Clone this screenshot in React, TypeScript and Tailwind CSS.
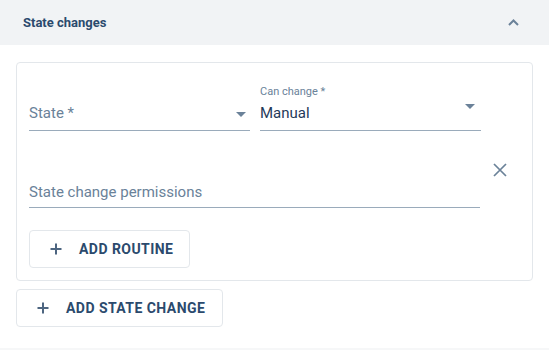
function Triangle({ className = "" }: { className?: string }) {
  return (
    <svg width="10" height="5" viewBox="0 0 10 5" className={className}>
      <path d="M0 0 L10 0 L5 5 Z" fill="#6b8299" />
    </svg>
  );
}

function PlusIcon() {
  return (
    <svg width="12" height="12" viewBox="0 0 12 12" className="shrink-0">
      <path d="M6 0.5 V11.5 M0.5 6 H11.5" stroke="#4d6580" strokeWidth="2" />
    </svg>
  );
}

function OutlineButton({ label, width }: { label: string; width: string }) {
  return (
    <button
      type="button"
      className={`${width} h-[38px] flex items-center pl-[20px] border border-[#e3e7eb] rounded-[4px] bg-white text-[#2b4a6d]`}
    >
      <PlusIcon />
      <span className="ml-[17px] text-[14px] font-bold tracking-[0.45px] leading-none">{label}</span>
    </button>
  );
}

export default function App() {
  return (
    <div className="w-[549px] h-[350px] bg-white flex flex-col font-['Roboto',sans-serif]">
      <div className="h-[45px] shrink-0 bg-[#f1f3f5] flex items-center justify-between pl-[23px] pr-[30px]">
        <span className="text-[13px] font-bold text-[#2b4a6d]">State changes</span>
        <svg width="11" height="7" viewBox="0 0 11 7">
          <path d="M1 6 L5.5 1.5 L10 6" fill="none" stroke="#6b8299" strokeWidth="2" />
        </svg>
      </div>

      <div className="px-4 pt-[17px] flex flex-col items-start">
        <div className="w-[517px] border border-[#e3e7eb] rounded-[4px] pl-[12px] pt-[21px] pb-[12px]">
          <div className="flex gap-[10px]">
            <div className="w-[221px] flex flex-col">
              <div className="h-[16px]" />
              <div className="h-[31px] pt-[3px] pb-[7px] flex items-center justify-between border-b border-[#9aabbb]">
                <span className="text-[15px] leading-[20px] text-[#6a8299]">State *</span>
                <Triangle className="mr-[4px] mt-[2px]" />
              </div>
            </div>
            <div className="w-[221px] flex flex-col">
              <div className="h-[16px] text-[11px] leading-[16px] text-[#6a8299]">Can change *</div>
              <div className="h-[31px] pt-[3px] pb-[7px] flex items-start justify-between border-b border-[#9aabbb]">
                <span className="text-[15px] leading-[20px] text-[#1f3a5a]">Manual</span>
                <Triangle className="mr-[6px] mt-[1px]" />
              </div>
            </div>
          </div>

          <div className="mt-[29px] flex items-start">
            <div className="w-[451px] pt-[22px] pb-[5px] border-b border-[#9aabbb]">
              <span className="block text-[15px] leading-[20px] text-[#6a8299]">State change permissions</span>
            </div>
            <svg width="14" height="14" viewBox="0 0 14 14" className="ml-[13px] mt-[3px]">
              <path d="M1 1 L13 13 M13 1 L1 13" stroke="#6b8299" strokeWidth="1.75" />
            </svg>
          </div>

          <div className="mt-[22px]">
            <OutlineButton label="ADD ROUTINE" width="w-[161px]" />
          </div>
        </div>

        <div className="mt-[8px]">
          <OutlineButton label="ADD STATE CHANGE" width="w-[207px]" />
        </div>
      </div>

      <div className="mt-auto h-[2px] bg-[#f6f7f8]" />
    </div>
  );
}
